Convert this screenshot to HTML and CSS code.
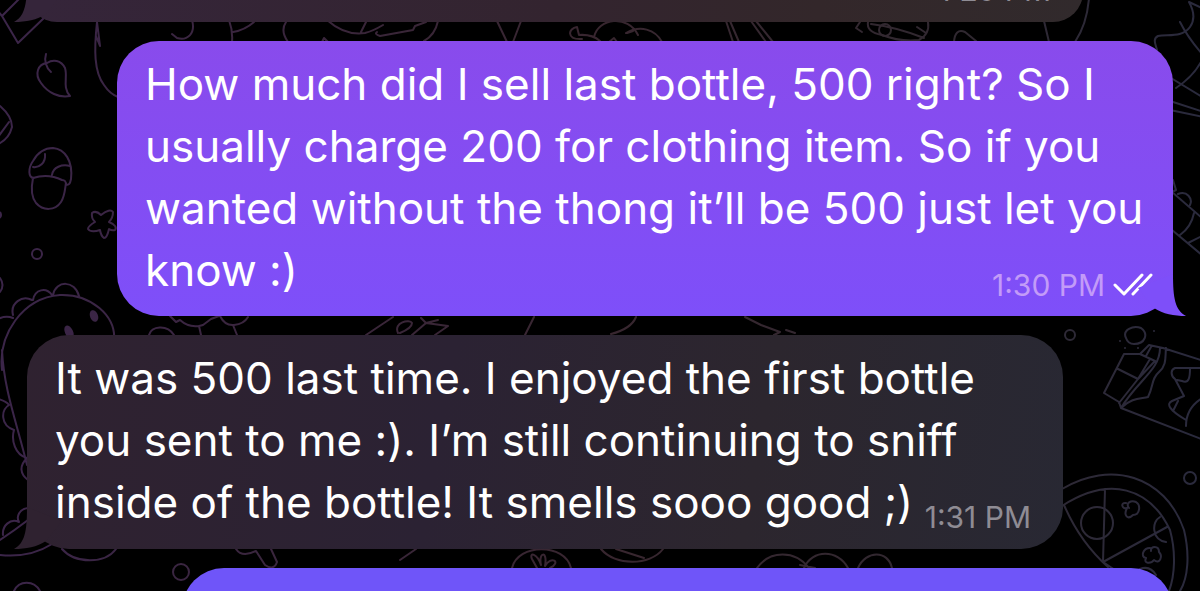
FILE: index.html
```
<!DOCTYPE html>
<html lang="en">
<head>
  <meta charset="UTF-8" />
  <meta name="viewport" content="width=device-width, initial-scale=1.0"/>
  <title>Chat</title>
  <link rel="stylesheet" href="styles.css">
</head>
<body>

  <svg class="wallpaper" viewBox="0 0 1200 591" preserveAspectRatio="xMidYMid slice" aria-hidden="true">
    <defs>
      <linearGradient id="ink" gradientUnits="userSpaceOnUse" x1="0" y1="0" x2="1200" y2="0">
        <stop offset="0" stop-color="#3b2549"/>
        <stop offset="0.5" stop-color="#38262f"/>
        <stop offset="0.8" stop-color="#302830"/>
        <stop offset="1" stop-color="#2a2a3d"/>
      </linearGradient>
    </defs>
    <g fill="none" stroke="url(#ink)" stroke-width="2" stroke-linecap="round" stroke-linejoin="round">
      <!-- envelope and leaf -->
      <path d="M20 -2L2 16L18 43L46 16M2 16L-3 10"/>
      <path d="M46 54C44 60 46 68 51 72M47 63C53 59 61 60 65 68C68 77 62 87 70 96C59 98 48 93 41 83C34 74 38 64 47 63"/>
      <path d="M97 22C94 50 94 72 104 85Q110 94 118 97M97 22L100 46L96 36"/>
      <!-- nut, star, beads -->
      <path d="M0 106C7 112 12 120 12 127C10 135 5 141 -2 144M9 122L-2 137"/>
      <path d="M34 178C28 178 28 168 33 161C38 152 45 148 53 148C65 149 73 161 71 179C70 184 69 185 66 185C66 181 65 180 62 180C52 175 42 175 33 178M33 178C31 188 32 198 36 203C43 211 55 211 61 202C65 196 65 188 66 183M45 154C46 163 39 168 33 167M52 175C53 167 62 164 70 166"/>
      <path d="M92 213Q96 210 101 215Q110 208 113 212Q113 218 109 222Q118 226 115 230Q112 231 109 229Q107 238 104 238Q101 236 100 230Q91 233 88 229Q88 226 95 222Q91 218 92 213Z"/>
      <circle cx="37" cy="254" r="5"/>
      <circle cx="-2" cy="215" r="3"/>
      <path d="M0 278Q5 285 0 292"/>
      <!-- dinosaur -->
      <path d="M2 370C-2 335 22 298 60 295C90 294 117 315 114 342M2 350C4 390 16 420 27 465M13 315C10 303 22 295 32 300M33 300C35 289 46 287 52 295M53 295C56 280 75 280 79 296M-2 319Q6 315 13 318M-2 399Q6 401 9 405C1 410 0 425 14 430C11 440 15 455 27 458C19 466 20 474 28 480M28 508C19 509 16 517 19 522C10 518 2 526 3 535M0 540Q15 530 28 520M0 555Q30 558 52 544M62 549C75 564 105 564 116 549M14 591C19 580 34 580 40 591"/>
      <g fill="url(#ink)">
        <ellipse cx="94" cy="316" rx="3" ry="5" transform="rotate(-20 94 316)"/>
        <ellipse cx="69" cy="332" rx="3" ry="6" transform="rotate(-25 69 332)"/>
      </g>
      <!-- strip between the first bubbles -->
      <path d="M192 20C196 34 187 41 177 38L172 34M229 20Q233 31 232 42M233 32Q245 30 254 22M286 22Q280 31 288 42M327 20Q345 36 365 33Q373 31 383 25M361 32L366 22M377 32Q374 34 380 36L413 30L415 26L426 22M438 21Q435 35 424 41"/>
      <path d="M322 42L324 38L328 42M497 21L507 42M521 21L513 42M582 39C566 40 568 28 577 27L579 35Q592 34 600 41M594 37C598 18 628 14 638 35M626 33C640 25 655 29 662 42M627 33L633 31M609 42L614 38L617 42M726 21L733 42M730 21L739 42M751 21L766 42M756 21L773 42"/>
      <path d="M860 22L856 28L862 32M868 22Q866 32 882 35Q900 42 919 40Q930 34 928 22M871 24Q896 27 924 38M917 27L926 33"/>
      <circle cx="885" cy="30" r="6"/>
      <path d="M954 42Q955 28 965 32L976 41M1044 21L1049 42M1089 -2Q1087 24 1075 42"/>
      <!-- right edge -->
      <path d="M1189 2C1194 11 1195 20 1190 27C1182 38 1168 34 1158 36C1152 39 1156 45 1157 50M1189 2L1202 8M1180 22C1186 34 1195 46 1204 56M1202 60Q1194 76 1176 88M1171 78L1204 98M1170 101L1204 112M1170 110L1204 117"/>
      <path d="M1173 180L1176 190L1172 192L1202 218M1178 194C1187 190 1193 199 1190 205M1194 213C1192 223 1187 230 1180 235M1172 230L1202 255M1188 243L1202 236"/>
      <!-- strip between the second and third bubbles -->
      <path d="M149 335C151 326 167 324 174 335M170 316L176 322L180 320Q190 329 203 325L211 319L219 316M199 326L201 335M220 316Q225 326 234 325Q244 324 248 317M233 325L237 335M366 335L393 317M398 333C393 322 410 319 412 323Q412 328 400 333M421 318L426 323L438 320M426 323L412 335M426 323L448 326L435 335M534 317L525 335M636 317Q631 329 611 334M745 317L761 325L780 332L774 335M795 333L786 330"/>
      <!-- milk carton -->
      <circle cx="1070" cy="335" r="5"/>
      <path d="M1126 338C1122 330 1133 325 1141 328C1149 334 1145 344 1134 344Q1128 344 1126 338ZM1124 354L1104 393L1119 402L1121 408L1204 440M1124 354L1140 354L1149 345L1163 348L1204 361M1118 369L1138 379M1150 359L1138 379L1119 403M1140 354L1155 361L1138 379M1151 347L1146 356M1160 348C1160 370 1138 380 1121 408C1132 397 1142 399 1148 397C1154 385 1151 379 1159 372C1167 365 1165 357 1166 348M1204 368H1175C1170 370 1171 376 1175 379L1184 396L1172 401C1166 404 1169 410 1186 420M1190 369C1190 377 1189 384 1182 381L1177 380M1204 397Q1186 407 1186 426M1173 411L1178 401"/>
      <path d="M1120 341L1120 341M1154 331L1154 331M1125 348L1125 348M1138 348L1138 348"/>
      <!-- pizza -->
      <path d="M1062 489C1110 460 1165 475 1184 530C1190 555 1188 578 1180 591M1062 506C1110 475 1150 488 1170 530C1176 552 1175 575 1169 591M1064 505Q1080 542 1108 567M1105 489L1103 562L1167 527M1103 562L1115 570M1166 542C1152 540 1151 522 1160 517M1140 569Q1150 565 1156 575"/>
      <circle cx="1097" cy="523" r="16"/>
      <path d="M1126 503C1120 502 1122 510 1127 508C1123 516 1128 520 1133 515C1140 515 1141 505 1136 502C1131 500 1125 503 1129 508"/>
      <path d="M1150 548C1143 548 1140 557 1146 558C1143 564 1151 564 1154 560C1160 565 1163 556 1159 552C1159 545 1150 546 1151 551"/>
      <circle cx="1190" cy="478" r="6"/>
      <!-- bottom strip -->
      <circle cx="181" cy="572" r="8"/>
      <path d="M236 549Q242 558 256 551L265 565Q274 571 277 562L271 549M400 560L416 549M512 568C518 543 565 543 571 568M537 568L532 559C529 552 537 553 541 565C538 552 548 550 545 566C551 555 562 562 550 568M601 549C615 566 650 566 663 549M616 549L644 558M757 568C770 550 795 550 809 568M800 565L815 568M804 568C812 549 838 549 848 568M858 568C866 550 888 550 892 568"/>
    </g>
  </svg>

  <main class="chat">
    <div class="message incoming clipped">
      <div class="last-line">
        <span></span>
        <span class="meta"><time>1:29 PM</time></span>
      </div>
      <svg class="tail" viewBox="0 0 56 42" aria-hidden="true"><path d="M43 0C43 24 45 36 56 42C44 42 33 40 24 34L8 14Z"/></svg>
    </div>

    <div class="message outgoing">
      <p>How much did I sell last bottle, 500 right? So I<br>usually charge 200 for clothing item. So if you<br>wanted without the thong it’ll be 500 just let you</p>
      <div class="last-line">
        <span>know :)</span>
        <span class="meta">
          <time>1:30 PM</time>
          <svg class="checks" viewBox="0 0 40 24" role="img" aria-label="Read"><path d="M2 12L11 21L29 2M20 21L38 2"/></svg>
        </span>
      </div>
      <svg class="tail" viewBox="0 0 56 42" aria-hidden="true"><path d="M43 0C43 24 45 36 56 42C44 42 33 40 24 34L8 14Z"/></svg>
    </div>

    <div class="message incoming">
      <p>It was 500 last time. I enjoyed the first bottle<br>you sent to me :). I’m still continuing to sniff</p>
      <div class="last-line">
        <span>inside of the bottle! It smells sooo good ;)</span>
        <span class="meta"><time>1:31 PM</time></span>
      </div>
      <svg class="tail" viewBox="0 0 56 42" aria-hidden="true"><path d="M43 0C43 24 45 36 56 42C44 42 33 40 24 34L8 14Z"/></svg>
    </div>

    <div class="message outgoing next"></div>
  </main>

</body>
</html>
```
FILE: styles.css
```
* {
  margin: 0;
  padding: 0;
  box-sizing: border-box;
}

body {
  height: 100vh;
  overflow: hidden;
  background: #000;
  font-family: Inter, "Liberation Sans", sans-serif;
}

.wallpaper {
  position: absolute;
  width: 100%;
  height: 100%;
}

.chat {
  position: relative;
  height: 100%;
  overflow: hidden;
  display: flex;
  flex-direction: column;
  gap: 19px;
  padding: 0 27px;
}

.message {
  position: relative;
  flex-shrink: 0;
  padding: 12px 28px 15px;
  border-radius: 42px;
  font-size: 44px;
  line-height: 62px;
  color: #fff;
  white-space: nowrap;
}

.incoming {
  align-self: flex-start;
  width: 1036px;
  max-width: 93%;
  padding-bottom: 16px;
  background: linear-gradient(100deg, #2f2230, #2b2233 40%, #2c262e 70%, #282833);
}

.outgoing {
  align-self: flex-end;
  width: 1056px;
  max-width: 93%;
  background: linear-gradient(#894bec, #7e4ff9);
}

/* scrolled half out of view */
.clipped {
  width: 1056px;
  margin-top: -38px;
  background: linear-gradient(90deg, #35253a, #33242f 50%, #33272a 75%, #312a2c);
}

.next {
  width: 991px;
  height: 100px;
  background: #6f55f9;
}

.last-line {
  display: flex;
  justify-content: space-between;
  align-items: flex-end;
}

.meta {
  display: flex;
  align-items: center;
  gap: 8px;
  height: 32px;
  margin-right: 4px;
  font-size: 30px;
  line-height: 32px;
  color: #8f8c94;
}

.outgoing .meta {
  margin-right: -8px;
  color: #c39bf8;
}

.checks {
  width: 40px;
  height: 24px;
  fill: none;
  stroke: #fff;
  stroke-width: 3;
  stroke-linecap: round;
  stroke-linejoin: round;
}

.tail {
  position: absolute;
  right: -13px;
  bottom: 0;
  width: 56px;
  height: 42px;
  fill: #7e4ff9;
}

.incoming .tail {
  right: auto;
  left: -13px;
  transform: scaleX(-1);
  fill: #2f2230;
}

.clipped .tail {
  fill: #35253a;
}
```
